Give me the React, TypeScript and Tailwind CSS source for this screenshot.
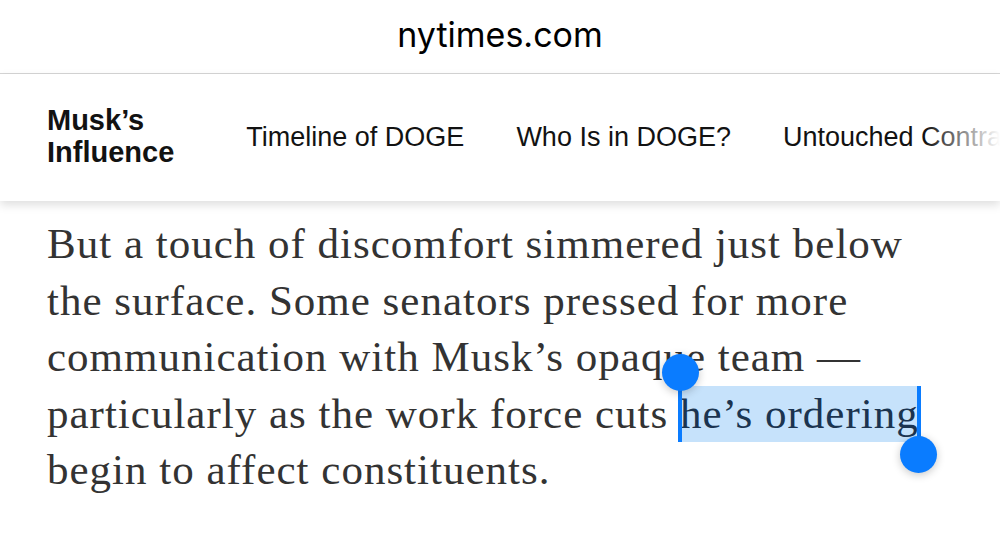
import React from 'react';

const navLinks = ['Timeline of DOGE', 'Who Is in DOGE?', 'Untouched Contracts', 'Cuts'];

const SelectionHandle: React.FC<{ side: 'start' | 'end' }> = ({ side }) => (
  <>
    <span
      className={`absolute top-0 w-[4px] bg-[#0a7cff] ${
        side === 'start' ? 'left-[-2px] bottom-0' : 'right-[-2px] bottom-[-14px]'
      }`}
    />
    <span
      className={`absolute w-[37px] h-[37px] rounded-full bg-[#0a7cff] shadow-[0_2px_8px_rgba(0,0,0,0.22)] ${
        side === 'start' ? 'left-[-18px] top-[-32px]' : 'right-[-18px] bottom-[-31px]'
      }`}
    />
  </>
);

const App: React.FC = () => {
  return (
    <div className="w-[1000px] h-[557px] bg-white overflow-hidden">
      {/* Адресная строка */}
      <header className="h-[74px] flex items-center justify-center border-b border-[#d6d6d6] font-['Inter',sans-serif] text-[34px] text-black pb-[4px]">
        nytimes.com
      </header>

      {/* Навигация раздела */}
      <nav className="relative z-10 h-[127px] flex items-center bg-white shadow-[0_4px_9px_rgba(0,0,0,0.13)] overflow-hidden font-['Liberation_Sans',Arial,sans-serif] text-[#121212]">
        <div className="pl-[47px] pb-[3px] text-[29px] font-bold leading-[32px] whitespace-nowrap">
          Musk’s
          <br />
          Influence
        </div>
        <div className="ml-[35px] w-[2px] h-[63px] bg-[#e2e2e2]" />
        <div className="ml-[37px] flex gap-[52px] text-[27px] whitespace-nowrap">
          {navLinks.map(link => (
            <span key={link}>{link}</span>
          ))}
        </div>
        <div className="absolute right-0 top-0 h-full w-[75px] bg-gradient-to-r from-white/0 to-white" />
      </nav>

      {/* Текст статьи */}
      <article className="pl-[47px] pt-[15px] font-['Liberation_Serif','Times_New_Roman',serif] text-[43px] leading-[56.5px] tracking-[1px] text-[#333333] whitespace-nowrap">
        <div>But a touch of discomfort simmered just below</div>
        <div>the surface. Some senators pressed for more</div>
        <div>communication with Musk’s opaque team —</div>
        <div>
          particularly as the work force cuts{' '}
          <span className="relative inline-block bg-[#c6e2fb] text-[#1b3450]">
            he’s ordering
            <SelectionHandle side="start" />
            <SelectionHandle side="end" />
          </span>
        </div>
        <div>begin to affect constituents.</div>
      </article>
    </div>
  );
};

export default App;
